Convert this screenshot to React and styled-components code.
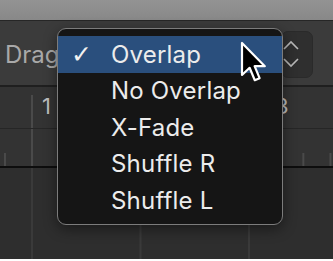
import React from 'react'
import styled, { createGlobalStyle } from 'styled-components'

const Global = createGlobalStyle`
  html, body { margin: 0; padding: 0; background: #ffffff; }
  body { font-family: Inter, "Noto Sans", "Liberation Sans", sans-serif; }
`

const Win = styled.div`
  position: relative;
  width: 333px;
  height: 259px;
  overflow: hidden;
  display: flex;
  flex-direction: column;
  background: #2e2e2e;
`

const TopStrip = styled.div`
  height: 20px;
  flex: none;
  background: linear-gradient(#939393, #888888);
  border-bottom: 1px solid #262626;
`

const Toolbar = styled.div`
  height: 64px;
  flex: none;
  background: #3b3b3b;
  border-bottom: 2px solid #1f1f1f;
  display: flex;
  align-items: center;
  justify-content: space-between;
  padding: 0 20px 0 5px;
`

const DragLabel = styled.span`
  font-size: 24px;
  color: #a9a9a9;
  margin-top: 2px;
`

const Stepper = styled.div`
  width: 30px;
  height: 45px;
  margin-top: 2px;
  border-radius: 7px;
  background: #2f2f2f;
  border: 1px solid #2a2a2a;
  display: flex;
  align-items: center;
`

/* ruler: long bar line, split line and quarter ticks drawn as background layers */
const Ruler = styled.div`
  height: 81px;
  flex: none;
  box-sizing: border-box;
  border-bottom: 2px solid #0d0d0d;
  background-color: #333333;
  background-image:
    linear-gradient(#262626, #262626),
    linear-gradient(#4a4a4a, #4a4a4a),
    linear-gradient(to right, #4a4a4a 0 2px, transparent 2px);
  background-size: 100% 1px, 2px 71px, 27.125px 13px;
  background-position: 0 41px, 31px 8px, 4px 66px;
  background-repeat: no-repeat, no-repeat, repeat-x;
  display: flex;
  align-items: flex-start;
  padding: 6px 0 0 42px;
  gap: 224px;
`

const BarNum = styled.span`
  font-size: 22px;
  color: #bdbdbd;
`

const Tracks = styled.div`
  flex: 1;
  background-color: #2e2e2e;
  background-image: linear-gradient(to right, #3a3a3a 0 2px, transparent 2px);
  background-size: 108.5px 100%;
  background-position: 31px 0;
`

const Menu = styled.div`
  position: absolute;
  left: 57px;
  top: 28px;
  width: 226px;
  height: 197px;
  box-sizing: border-box;
  padding: 7px 0 6px;
  background: #151515;
  border: 1.5px solid #7c7c7c;
  border-radius: 9px;
  box-shadow: 0 4px 14px rgba(0, 0, 0, 0.45);
  display: flex;
  flex-direction: column;
`

const Item = styled.div`
  height: 36.5px;
  flex: none;
  display: flex;
  align-items: center;
  background: ${p => (p.active ? '#2a4f7d' : 'transparent')};
  color: #ececec;
  font-size: 24px;
  letter-spacing: 0.2px;
`

const Check = styled.span`
  width: 53px;
  padding-left: 13px;
  box-sizing: border-box;
  font-size: 25px;
  font-family: "DejaVu Sans", sans-serif;
  color: #f2f2f2;
`

const Cursor = styled.svg`
  position: absolute;
  left: 240px;
  top: 41px;
`

const items = ['Overlap', 'No Overlap', 'X-Fade', 'Shuffle R', 'Shuffle L']

export default function App() {
  return (
    <>
      <Global />
      <Win>
        <TopStrip />
        <Toolbar>
          <DragLabel>Drag</DragLabel>
          <Stepper>
            <svg width="18" height="30" viewBox="0 0 18 30">
              <path d="M2 10 L9 3 L16 10" fill="none" stroke="#b9b9b9" strokeWidth="1.6" />
              <path d="M2 20 L9 27 L16 20" fill="none" stroke="#b9b9b9" strokeWidth="1.6" />
            </svg>
          </Stepper>
        </Toolbar>
        <Ruler>
          <BarNum>1</BarNum>
          <BarNum>3</BarNum>
        </Ruler>
        <Tracks />
        <Menu>
          {items.map((t, i) => (
            <Item key={t} active={i === 0}>
              <Check>{i === 0 ? '✓' : ''}</Check>
              {t}
            </Item>
          ))}
        </Menu>
        <Cursor width="28" height="44" viewBox="0 0 14 22">
          <path
            d="M1 1 L1 17 L4.8 13.4 L7.4 19.6 L9.8 18.6 L7.3 12.6 L12.4 12.6 Z"
            fill="#000"
            stroke="#fff"
            strokeWidth="1.1"
            strokeLinejoin="round"
          />
        </Cursor>
      </Win>
    </>
  )
}
